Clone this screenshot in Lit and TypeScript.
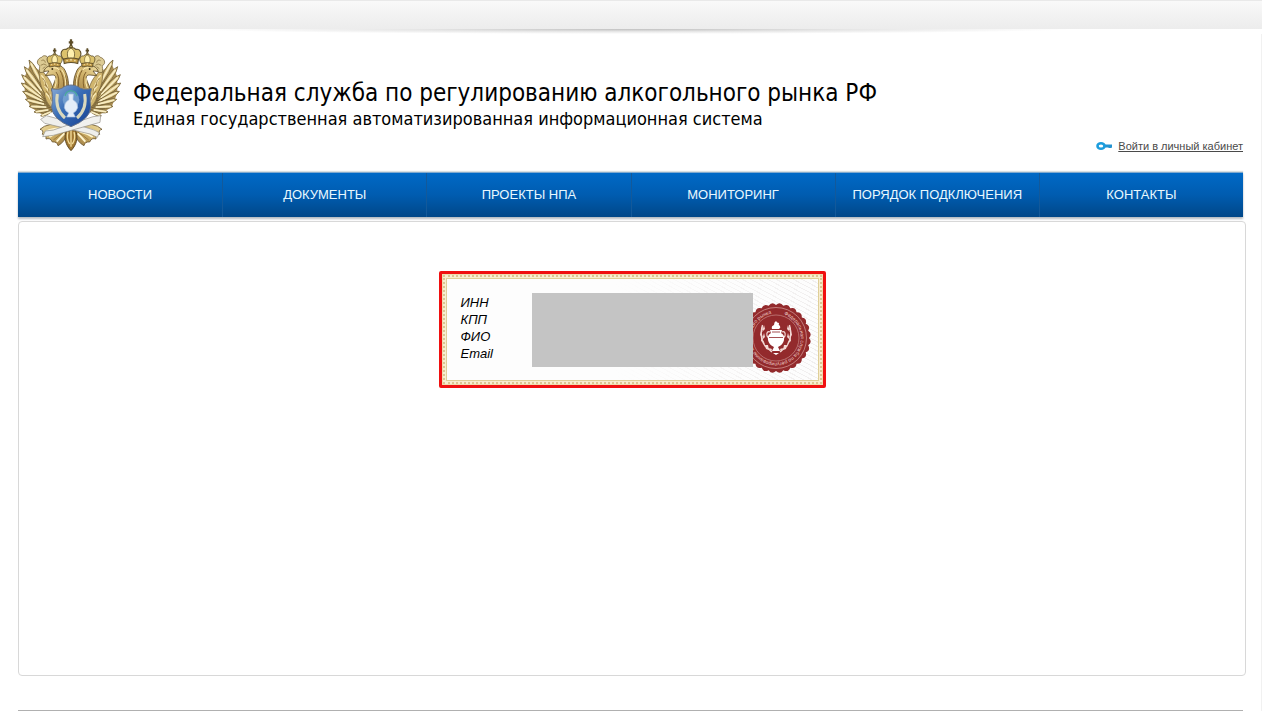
import { LitElement, html, css, svg } from "lit";
import { customElement } from "lit/decorators.js";

const NAV = ["НОВОСТИ", "ДОКУМЕНТЫ", "ПРОЕКТЫ НПА", "МОНИТОРИНГ", "ПОРЯДОК ПОДКЛЮЧЕНИЯ", "КОНТАКТЫ"];
const FIELDS = ["ИНН", "КПП", "ФИО", "Email"];

// Long flight feathers of one wing, from the shoulder outwards: [tip x, tip y, root x, root y, width]
const FEATHERS: number[][] = [
  [57, 90, 112, 190, 14],
  [43, 110, 108, 200, 14],
  [35, 134, 106, 208, 14],
  [34, 159, 108, 214, 14],
  [38, 184, 112, 220, 13],
  [46, 208, 116, 226, 12],
  [57, 229, 122, 232, 11],
  [72, 246, 126, 238, 10],
  [92, 258, 130, 242, 8],
];

const feather = ([tx, ty, rx, ry, w]: number[]) => {
  const dx = tx - rx, dy = ty - ry, l = Math.hypot(dx, dy);
  const nx = (-dy / l) * w, ny = (dx / l) * w;
  const mx = rx + dx * 0.8, my = ry + dy * 0.8;
  return svg`
    <path d="M${rx} ${ry} Q${mx + nx} ${my + ny} ${tx} ${ty} Q${mx - nx} ${my - ny} ${rx} ${ry}Z"
      fill="#d8c181" stroke="#6f5c34" stroke-width="2.4"/>
    <path d="M${rx + dx * 0.2} ${ry + dy * 0.2} L${rx + dx * 0.9} ${ry + dy * 0.9}" stroke="#f8ecc2" stroke-width="5"/>`;
};

const crown = (x: number, y: number, s: number) => svg`
  <g transform="translate(${x} ${y}) scale(${s})" stroke="#5d4e2a" stroke-width="3">
    <path d="M0-42V-24M-6-34H6" stroke-width="6"/>
    <circle cx="0" cy="-21" r="4" fill="#e9d58a"/>
    <path d="M-20 12C-33-4-24-18-13-15C-8-22 8-22 13-15C24-18 33-4 20 12Z" fill="#dcc26c"/>
    <path d="M-7 10C-13-4-8-16 0-18C8-16 13-4 7 10Z" fill="#fff0ae" stroke-width="2"/>
    <path d="M-20 11Q0 5 20 11L18 23Q0 17-18 23Z" fill="#c59d48"/>
    <path d="M-12 15H-9M-2 13H2M9 15H12" stroke="#fff4c8"/>
  </g>`;

const half = svg`
  <path d="M62 100L44 140L44 190L62 232L100 256L134 242L124 170L92 126Z" fill="#a98c50"/>
  ${FEATHERS.map(feather)}
  <path d="M88 118C103 128 119 144 128 172L134 238C117 230 104 210 103 188C94 176 86 150 88 118Z"
    fill="#d0b56e" stroke="#6f5c34" stroke-width="2"/>
  <path d="M94 136Q106 148 106 164M100 150Q114 164 114 182M104 168Q121 184 120 204M108 190Q124 206 126 224"
    fill="none" stroke="#f9ebba" stroke-width="4"/>
  <path d="M98 144Q108 154 109 172M106 162Q118 174 118 194M108 182Q122 196 124 214"
    fill="none" stroke="#80622b" stroke-width="2"/>
  <path d="M90 128C84 118 92 112 88 106C76 100 84 84 95 82C101 72 116 78 118 92L124 104L112 112L104 126Z"
    fill="#dccb94" stroke="#685328" stroke-width="2"/>
  <path d="M94 92Q104 86 106 98M92 106Q102 98 110 106M98 116L106 110" fill="none" stroke="#7d6637" stroke-width="2"/>
  <path d="M180 194C174 172 178 150 168 128C162 108 143 100 127 105C114 107 104 114 101 124L117 123L106 137L126 135C137 134 140 142 134 154L124 182Z"
    fill="url(#gold)" stroke="#5a4824" stroke-width="2.4"/>
  <path d="M149 120Q162 138 161 171M138 126Q151 143 144 174M165 136Q172 154 171 176" fill="none" stroke="#80602b" stroke-width="3"/>
  <path d="M155 119Q169 139 167 172M130 113Q143 112 148 120M137 145Q141 158 134 174" fill="none" stroke="#fff0b9" stroke-width="3"/>
  <circle cx="127" cy="117" r="2.8" fill="#3e3218"/>
  ${crown(134, 91, 0.86)}
  <path d="M170 284Q112 276 90 298Q102 300 97 313Q110 313 108 327Q121 322 127 336Q141 334 144 347Q161 340 178 304Z"
    fill="url(#gold)" stroke="#66512b" stroke-width="2.4"/>
  <path d="M155 296Q127 294 106 306M158 304Q135 310 118 321M163 310Q151 322 140 335"
    fill="none" stroke="#fff5cf" stroke-width="6"/>
  <path d="M155 300Q129 301 108 315M163 306Q144 318 130 330" fill="none" stroke="#866831" stroke-width="2"/>`;

const emblem = html`
  <svg class="emblem" viewBox="24 27 312 342" role="img" aria-label="Герб">
    <defs>
      <linearGradient id="gold" x1="0" y1="0" x2="1" y2="1">
        <stop offset="0" stop-color="#f0dfa3"/><stop offset=".5" stop-color="#cdae66"/><stop offset="1" stop-color="#92713a"/>
      </linearGradient>
      <linearGradient id="shield" x1="0" y1="0" x2="1" y2="1">
        <stop offset="0" stop-color="#8daed8"/><stop offset=".45" stop-color="#386db6"/><stop offset="1" stop-color="#153f91"/>
      </linearGradient>
    </defs>
    ${half}
    <g transform="translate(366 0) scale(-1 1)">${half}</g>
    <ellipse cx="183" cy="124" rx="11" ry="14" fill="#fff"/>
    <path d="M183 284C163 300 156 334 183 362C210 334 203 300 183 284Z" fill="#a17832" stroke="#4f3b19" stroke-width="2.5"/>
    <path d="M183 298V350M174 306Q168 326 179 342M192 306Q198 326 187 342" fill="none" stroke="#f5df9e" stroke-width="4"/>
    <path d="M92 268L109 257L150 268L252 300L268 308L262 322L240 312L104 280Z" fill="#efefec" stroke="#8f8d86" stroke-width="2"/>
    <path d="M272 257L270 277L130 316L98 320L106 303L130 300L249 260Z" fill="#f1f1ee" stroke="#8f8d86" stroke-width="2"/>
    <path d="M124 176Q151 182 162 170Q183 160 204 170Q216 182 244 176Q238 196 242 232Q240 268 183 290Q128 268 125 232Q130 196 124 176Z"
      fill="url(#shield)" stroke="#65728b" stroke-width="3"/>
    <path d="M142 192Q134 237 165 264M224 192Q232 237 201 264" fill="none" stroke="#d9d8bd" stroke-width="9"/>
    <circle cx="183" cy="209" r="25" fill="#8ab4da" opacity=".6"/>
    <path d="M165 198Q168 184 183 182Q198 184 201 198" fill="none" stroke="#4aa89c" stroke-width="4"/>
    <path d="M176 192H190L189 209Q205 218 203 233Q199 245 190 249L196 261H170L176 249Q165 243 163 233Q163 217 177 209Z"
      fill="#e3edf8" stroke="#a7bfe0" stroke-width="2"/>
    ${crown(183, 75, 1.12)}
  </svg>`;

const scallops = (() => {
  const n = 28, pts: string[] = [];
  for (let i = 0; i < n; i++) {
    const a = (i / n) * Math.PI * 2, b = ((i + 1) / n) * Math.PI * 2, m = (a + b) / 2;
    const p = (r: number, t: number) => `${(35 + r * Math.cos(t)).toFixed(2)} ${(35 + r * Math.sin(t)).toFixed(2)}`;
    if (!i) pts.push(`M${p(33, a)}`);
    pts.push(`Q${p(37, m)} ${p(33, b)}`);
  }
  return pts.join("") + "Z";
})();

const sealSide = svg`
  <path d="M21.500 22Q18 34 24 43L31 49" fill="none" stroke="#f3d9d5" stroke-width="1.300"/>
  <path d="M21.500 22L20 26L22 29ZM20 28L19 32L22 35ZM20.500 34L20 38L24 41ZM23 22L24 26L21 29ZM23 30L24 34L21 37ZM24 42L27 42L28 47L25 46ZM28 45L31 46L30 49Z"
    fill="#f3d9d5"/>
  <path d="M29.500 29Q25 27.500 26 33L28.500 36" fill="none" stroke="#f3d9d5" stroke-width="1.200"/>`;

const seal = html`
  <svg class="seal" viewBox="0 0 70 70" aria-hidden="true">
    <path d=${scallops} fill="#932a2c"/>
    <circle cx="35" cy="35" r="30.500" fill="none" stroke="#d9a09c" stroke-width=".7"/>
    <circle cx="35" cy="35" r="23" fill="none" stroke="#c98a86" stroke-width=".7"/>
    <path id="ring" d="M35 10.300A24.700 24.700 0 0 1 35 59.700A24.700 24.700 0 0 1 35 10.300" fill="none"/>
    <text class="ring-text"><textPath href="#ring" startOffset="8">Федеральная служба по регулированию алкогольного рынка</textPath></text>
    ${sealSide}
    <g transform="translate(70 0) scale(-1 1)">${sealSide}</g>
    <path d="M31 26Q30 23 33 22Q33 19 35 18Q36 20 38 20Q37 22 39 23Q40 25 38 26Z" fill="#fff"/>
    <path d="M29 27H41L40 30Q44 32 43 37Q42 42 37 44L39 48H31L33 44Q28 42 27 37Q26 32 30 30Z" fill="#fff"/>
    <path d="M28 34.500H42M31 29H39" stroke="#8f2427" stroke-width=".8"/>
    <path d="M32 50H38L35 52Z" fill="#fff"/>
  </svg>`;

@customElement("app-root")
export class AppRoot extends LitElement {
  static styles = css`
    :host {
      display: block;
      background: #fff;
      color: #000;
      font-family: "Liberation Sans", Arial, sans-serif;
    }
    .topbar {
      height: 28px;
      border-top: 1px solid #e9e9e9;
      background: linear-gradient(#f9f9f9, #ececec);
    }
    .topshade {
      height: 5px;
      background: radial-gradient(ellipse 35% 100% at 50% 0, #bfbfbf, #e6e6e6 50%, #fff);
    }
    .page {
      padding: 0 15px 0 18px;
      border-right: 1px solid #f1f1f1;
    }
    .head {
      display: flex;
      align-items: flex-start;
      padding-top: 5px;
      margin-right: 3px;
      height: 133px;
    }
    .emblem {
      width: 104px;
      height: 114px;
      flex: none;
    }
    .titles {
      flex: 1;
      padding: 39px 0 0 11px;
      font-family: Tahoma, "DejaVu Sans Condensed", "Noto Sans", sans-serif;
      white-space: nowrap;
    }
    h1, h2 {
      margin: 0;
      font-weight: 400;
    }
    h1 { font-size: 24px; line-height: 30px; }
    h2 { font-size: 18px; line-height: 22px; }
    .login {
      align-self: flex-end;
      display: flex;
      align-items: center;
      gap: 5px;
      margin-bottom: 18px;
      color: #4a4a4a;
      font-size: 11px;
      line-height: 16px;
      white-space: nowrap;
    }
    .key { width: 17px; height: 10px; }
    .nav {
      display: grid;
      grid-template-columns: repeat(6, 1fr);
      margin-right: 3px;
      border-top: 1px solid #7fa9cf;
      background: linear-gradient(#0069c6, #005cb0 50%, #004788);
      box-shadow: 0 -1px 1px #d9dfe0, 0 2px 2px #b4bcc2;
    }
    .nav a {
      color: #e8f8ff;
      font-size: 13px;
      line-height: 44px;
      text-align: center;
      text-decoration: none;
      white-space: nowrap;
    }
    .nav a + a { border-left: 1px solid #13599a; }
    .panel {
      margin-top: 4px;
      min-height: 404px;
      padding-top: 49px;
      border: 1px solid #d8d8d8;
      border-radius: 4px;
    }
    .card {
      box-sizing: border-box;
      width: 387px;
      margin: 0 auto;
      border: 3px solid #f01010;
      border-radius: 2px;
      padding: 1px;
      background: #f0dcae;
    }
    .frame {
      border: 2px dotted #dcc592;
      padding: 1px;
      background: #f8edd0;
    }
    .cert {
      display: flex;
      align-items: flex-start;
      border: 1px solid #dfcf98;
      padding: 14px 0 7px 14px;
      background:
        linear-gradient(90deg, #fdfdfd 45%, transparent),
        repeating-linear-gradient(28deg, #fdfdfd 0 3px, #f1efef 3px 4px);
    }
    .fields {
      flex: none;
      width: 71px;
      margin: 0;
      padding: 1px 0 0;
      list-style: none;
      font-size: 13px;
      font-style: italic;
      line-height: 17px;
    }
    .hidden-data {
      flex: none;
      z-index: 1;
      width: 221px;
      height: 74px;
      background: #c4c4c4;
    }
    .seal {
      width: 70px;
      height: 70px;
      margin: 10px 0 0 -12px;
      flex: none;
    }
    .ring-text {
      font-size: 5px;
      fill: #f0cfca;
    }
    .foot {
      margin: 34px 3px 0 0;
      border: 0;
      border-top: 2px solid #b0b0b0;
    }
  `;

  render() {
    return html`
      <div class="topbar"></div>
      <div class="topshade"></div>
      <div class="page">
        <header class="head">
          ${emblem}
          <div class="titles">
            <h1>Федеральная служба по регулированию алкогольного рынка РФ</h1>
            <h2>Единая государственная автоматизированная информационная система</h2>
          </div>
          <a class="login" href="#login">
            <svg class="key" viewBox="0 0 17 10" aria-hidden="true">
              <path d="M8 5H16M14 5V7" stroke="#2493d1" stroke-width="3" fill="none"/>
              <ellipse cx="5" cy="5" rx="3.500" ry="2.800" fill="#fff" stroke="#1c9ddd" stroke-width="2.600"/>
            </svg>
            Войти в личный кабинет
          </a>
        </header>
        <nav class="nav">${NAV.map((t) => html`<a href="#">${t}</a>`)}</nav>
        <main class="panel">
          <div class="card">
            <div class="frame">
              <div class="cert">
                <ul class="fields">${FIELDS.map((f) => html`<li>${f}</li>`)}</ul>
                <div class="hidden-data"></div>
                ${seal}
              </div>
            </div>
          </div>
        </main>
        <hr class="foot" />
      </div>
    `;
  }
}
